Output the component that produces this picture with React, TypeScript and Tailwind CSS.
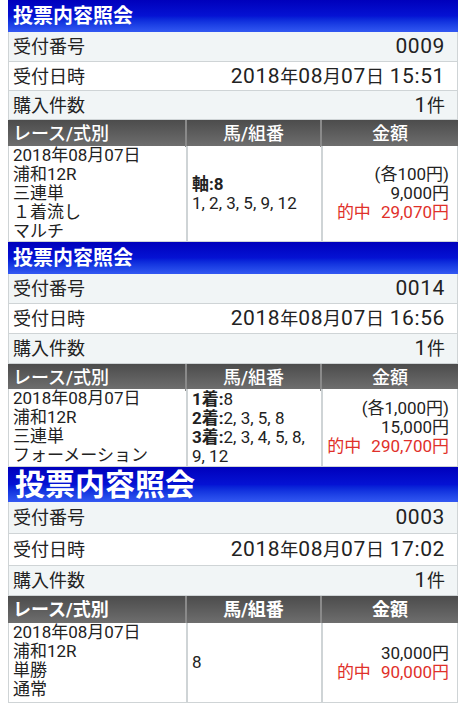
import type { ReactNode } from "react"

type Ticket = {
  number: string
  datetime: string
  count: string
  race: string[]
  horses: ReactNode
  amounts: ReactNode
  rows: [string, string, string]
  headH: string
  dataH: string
  big?: boolean
}

// CJK glyphs on the device render a little smaller than the Latin digits
function Jp({ text }: { text: string }) {
  const parts = text.split(/([\u3000-\u9fff\uff00-\uffef]+)/)
  return (
    <>
      {parts.map((p, i) =>
        i % 2 === 1 ? (
          <span key={i} className="text-[18px] tracking-normal">
            {p}
          </span>
        ) : (
          <span key={i}>{p}</span>
        )
      )}
    </>
  )
}

const Hit = ({ value }: { value: string }) => (
  <div className="text-[#e0302a]">
    的中<span className="ml-[10px]">{value}</span>
  </div>
)

const TICKETS: Ticket[] = [
  {
    number: "0009",
    datetime: "2018年08月07日 15:51",
    count: "1件",
    race: ["2018年08月07日", "浦和12R", "三連単", "１着流し", "マルチ"],
    horses: (
      <>
        <div className="font-bold">軸:8</div>
        <div>1, 2, 3, 5, 9, 12</div>
      </>
    ),
    amounts: (
      <>
        <div>(各100円)</div>
        <div>9,000円</div>
        <Hit value="29,070円" />
      </>
    ),
    rows: ["h-[30px]", "h-[29px]", "h-[29px]"],
    headH: "h-[26px]",
    dataH: "h-[96px]",
  },
  {
    number: "0014",
    datetime: "2018年08月07日 16:56",
    count: "1件",
    race: ["2018年08月07日", "浦和12R", "三連単", "フォーメーション"],
    horses: (
      <>
        <div>
          <b>1着:</b>8
        </div>
        <div>
          <b>2着:</b>2, 3, 5, 8
        </div>
        <div>
          <b>3着:</b>2, 3, 4, 5, 8,
        </div>
        <div>9, 12</div>
      </>
    ),
    amounts: (
      <>
        <div>(各1,000円)</div>
        <div>15,000円</div>
        <Hit value="290,700円" />
      </>
    ),
    rows: ["h-[30px]", "h-[30px]", "h-[30px]"],
    headH: "h-[25px]",
    dataH: "h-[78px]",
  },
  {
    number: "0003",
    datetime: "2018年08月07日 17:02",
    count: "1件",
    race: ["2018年08月07日", "浦和12R", "単勝", "通常"],
    horses: <div>8</div>,
    amounts: (
      <>
        <div>30,000円</div>
        <Hit value="90,000円" />
      </>
    ),
    rows: ["h-[32px]", "h-[32px]", "h-[30px]"],
    headH: "h-[27px]",
    dataH: "h-[80px]",
    big: true,
  },
]

function InfoRow(props: { label: string; value: string; shaded?: boolean; h: string }) {
  return (
    <div
      className={`flex items-center justify-between border-x border-b border-[#cfd4d6] pl-[4px] pr-[12px] text-[21px] leading-none ${props.h} ${
        props.shaded ? "bg-[#f1f5f6]" : "bg-white"
      }`}
    >
      <span>
        <Jp text={props.label} />
      </span>
      <span className="tracking-[0.6px]">
        <Jp text={props.value} />
      </span>
    </div>
  )
}

function TicketCard({ t }: { t: Ticket }) {
  return (
    <section>
      <div
        className={`flex items-center bg-gradient-to-b from-[#0000bc] via-[#0512d4] to-[#3358f2] font-bold text-white ${
          t.big ? "h-[35px] pl-[7px] text-[30px] leading-none" : "h-[32px] pl-[5px] text-[20px]"
        }`}
      >
        投票内容照会
      </div>
      <InfoRow label="受付番号" value={t.number} shaded h={t.rows[0]} />
      <InfoRow label="受付日時" value={t.datetime} h={t.rows[1]} />
      <InfoRow label="購入件数" value={t.count} shaded h={t.rows[2]} />

      <div
        className={`grid grid-cols-[179px_135px_136px] bg-gradient-to-b from-[#4c4c4c] to-[#6e6e6e] text-[18px] text-white ${t.headH} ${
          t.big ? "font-bold" : "font-medium"
        }`}
      >
        <div className="flex items-center border-r-2 border-[#8a8a8a] pl-[5px]">レース/式別</div>
        <div className="flex items-center justify-center border-r-2 border-[#8a8a8a]">馬/組番</div>
        <div className="flex items-center justify-center">金額</div>
      </div>

      <div
        className={`grid grid-cols-[179px_135px_136px] border-x border-b border-[#cfd4d6] bg-white text-[17px] leading-[19px] ${t.dataH}`}
      >
        <div className="border-r-2 border-[#cfd4d6] pl-[4px]">
          {t.race.map((line) => (
            <div key={line}>{line}</div>
          ))}
        </div>
        <div className="flex flex-col justify-center border-r-2 border-[#cfd4d6] pl-[4px]">
          {t.horses}
        </div>
        <div className="flex flex-col items-end justify-center pr-[10px]">{t.amounts}</div>
      </div>
    </section>
  )
}

export default function App() {
  return (
    <div
      className="min-h-[721px] bg-white px-[8px] text-[#222]"
      style={{ fontFamily: "Roboto, 'Noto Sans CJK JP', sans-serif" }}
    >
      <div className="w-[450px]">
        {TICKETS.map((t) => (
          <TicketCard key={t.number} t={t} />
        ))}
      </div>
    </div>
  )
}
